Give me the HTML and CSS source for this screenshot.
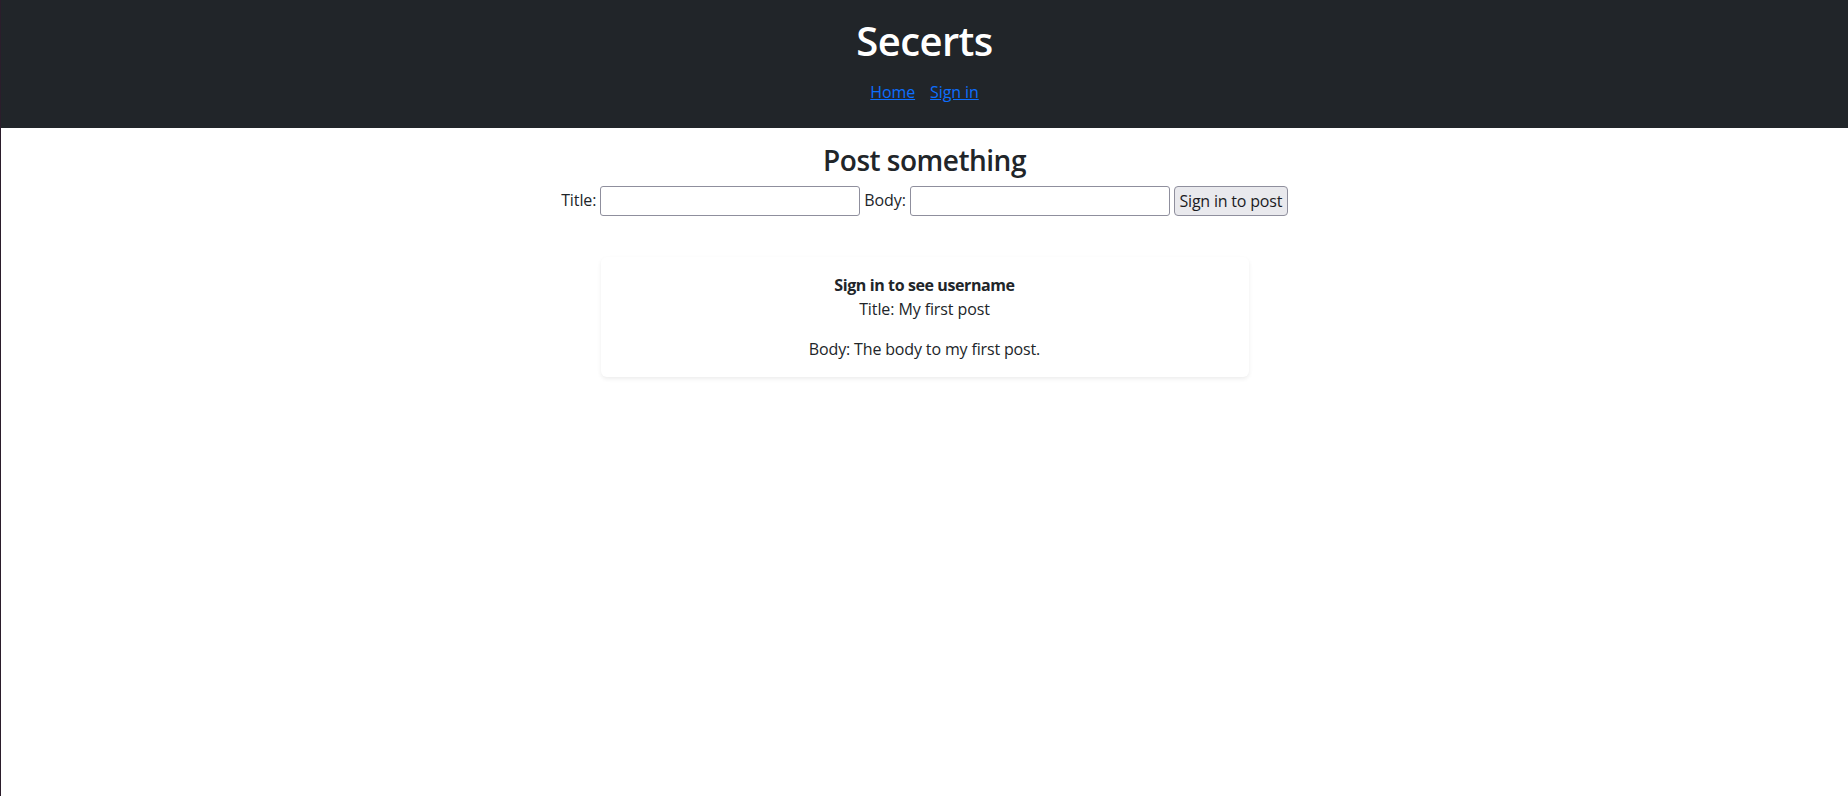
FILE: index.html
```html
<!DOCTYPE html>
<html lang="en">
<head>
<meta charset="utf-8">
<title>Secerts</title>
<link rel="stylesheet" href="styles.css">
</head>
<body>
<header class="site-header">
  <h1 class="site-title">Secerts</h1>
  <nav class="site-nav">
    <a href="#" class="nav-link">Home</a>
    <a href="#" class="nav-link">Sign in</a>
  </nav>
</header>
<main class="main">
  <h3 class="post-heading">Post something</h3>
  <form class="post-form">
    <label class="form-label" for="title">Title:</label>
    <input class="form-input" id="title" type="text">
    <label class="form-label" for="body">Body:</label>
    <input class="form-input" id="body" type="text">
    <button class="form-button" type="button">Sign in to post</button>
  </form>
  <div class="post-card">
    <div class="post-user">Sign in to see username</div>
    <p class="post-title">Title: My first post</p>
    <p class="post-body">Body: The body to my first post.</p>
  </div>
</main>
</body>
</html>
```
FILE: styles.css
```css
* { box-sizing: border-box; }
html, body { margin: 0; padding: 0; }
body {
  min-height: 100vh;
  border-left: 1px solid #2b1d2b;
  font-family: "Open Sans", sans-serif;
  font-size: 16px;
  line-height: 1.5;
  color: #212529;
  background: #fff;
  letter-spacing: -0.1px;
}
.site-header {
  height: 128px;
  background: #212529;
  padding-top: 17px;
  text-align: center;
}
.site-title {
  margin: 0 0 15px;
  font-size: 40px;
  font-weight: 600;
  line-height: 1.2;
  color: #fff;
  letter-spacing: -0.6px;
}
.site-nav {
  display: flex;
  justify-content: center;
  gap: 15px;
}
.nav-link {
  color: #0d6efd;
  text-decoration: underline;
}
.main {
  display: flex;
  flex-direction: column;
  align-items: center;
}
.post-heading {
  margin: 16px 0 8px;
  font-size: 28px;
  font-weight: 600;
  line-height: 1.2;
  letter-spacing: -0.5px;
}
.post-form {
  display: flex;
  align-items: flex-start;
  gap: 4px;
}
.form-label {
  padding-top: 2px;
}
.form-input {
  width: 260px;
  height: 30px;
  border: 1px solid #8f8f9d;
  border-radius: 3px;
  background: #fff;
  font: inherit;
  padding: 0 4px;
}
.form-button {
  width: 114px;
  height: 30px;
  padding: 0;
  border: 1px solid #8f8f9d;
  border-radius: 4px;
  background: #e9e9ed;
  color: #1b1b1f;
  font-family: "Open Sans", sans-serif;
  font-size: 16px;
  letter-spacing: -0.2px;
}
.post-card {
  width: 648px;
  margin-top: 41px;
  padding: 16px;
  border-radius: 6px;
  box-shadow: 0 2px 4px rgba(0, 0, 0, 0.075);
  text-align: center;
}
.post-user {
  font-weight: 700;
  letter-spacing: -0.4px;
}
.post-title {
  margin: 0 0 16px;
}
.post-body {
  margin: 0;
  letter-spacing: -0.15px;
}
```
